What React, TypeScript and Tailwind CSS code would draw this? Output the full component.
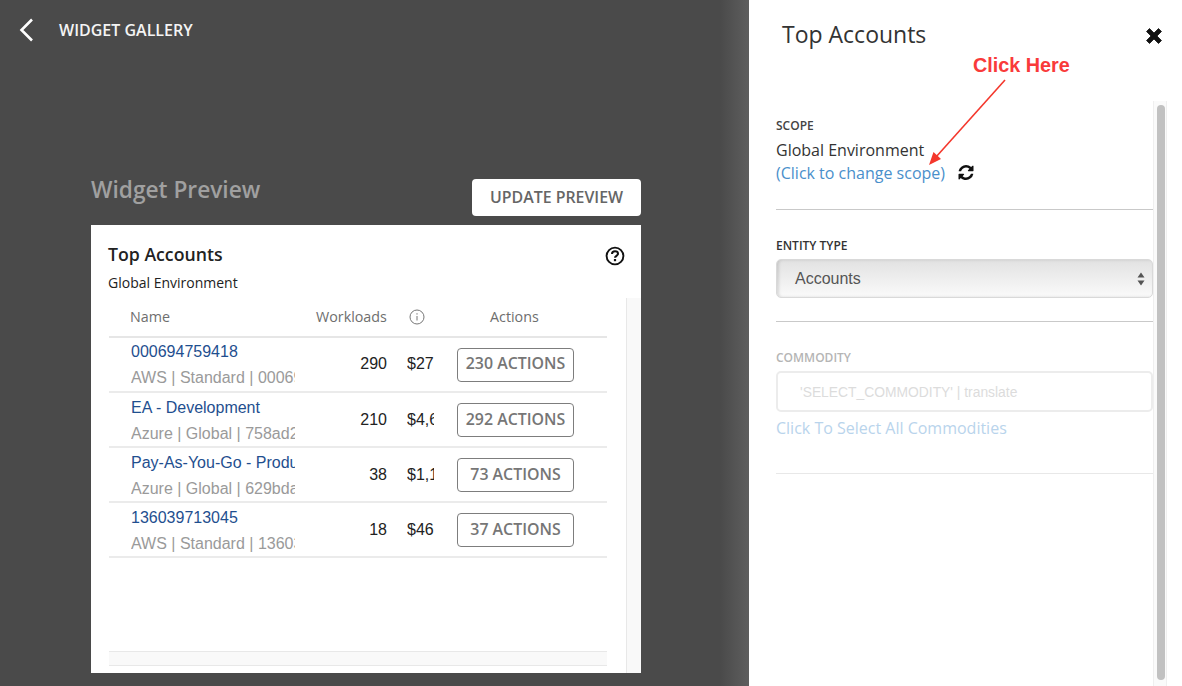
import React from "react";

const open = "font-['Open_Sans',sans-serif]";
const lib = "font-['Liberation_Sans',Arial,sans-serif]";

const rows = [
  { name: "000694759418", sub: "AWS | Standard | 000694759418", w: "290", c: "$27", a: "230 ACTIONS" },
  { name: "EA - Development", sub: "Azure | Global | 758ad253-cbf5", w: "210", c: "$4,6", a: "292 ACTIONS" },
  { name: "Pay-As-You-Go - Production", sub: "Azure | Global | 629bda47-1c", w: "38", c: "$1,1", a: "73 ACTIONS" },
  { name: "136039713045", sub: "AWS | Standard | 136039713045", w: "18", c: "$46", a: "37 ACTIONS" },
];

function Row({ r, first }: { r: (typeof rows)[number]; first: boolean }) {
  return (
    <div className="flex h-[55px] items-stretch border-b-2 border-[#ebebeb]">
      <div className={`ml-[22px] w-[164px] shrink-0 overflow-hidden whitespace-nowrap ${first ? "pt-[3px]" : "pt-[4px]"} ${lib}`}>
        <div className="text-[16px] leading-[22px] text-[#1f4f8f]">{r.name}</div>
        <div className="mt-[4px] text-[16px] leading-[22px] text-[#9a9a9a]">{r.sub}</div>
      </div>
      <div className={`flex w-[92px] shrink-0 items-center justify-end text-[16px] text-[#222] ${first ? "pb-[2px]" : ""} ${lib}`}>{r.w}</div>
      <div className={`ml-[20px] flex w-[27px] shrink-0 items-center overflow-hidden whitespace-nowrap text-[16px] text-[#222] ${first ? "pb-[2px]" : ""} ${lib}`}>{r.c}</div>
      <div className="ml-[23px] flex w-[117px] shrink-0 items-center">
        <div className={`flex h-[34px] w-full items-center justify-center rounded-[4px] border border-[#7d7d7d] text-[15.900px] font-semibold text-[#767676] ${first ? "pb-[1px]" : ""} ${open}`}>{r.a}</div>
      </div>
    </div>
  );
}

export default function App() {
  return (
    <div className={`relative flex h-[686px] w-[1182px] overflow-hidden bg-white ${open}`}>
      {/* left dark area */}
      <div className="flex w-[749px] shrink-0 flex-col bg-[linear-gradient(to_right,#4a4a4a_0,#4a4a4a_720px,#5e5e5e_749px)]">
        <div className="flex h-[60px] items-center pl-[19px]">
          <svg width="15" height="24" viewBox="0 0 15 24" fill="none" stroke="white" strokeWidth="2.6" className="shrink-0">
            <path d="M13 1.500 2.500 12 13 22.500" />
          </svg>
          <span className="ml-[25px] text-[16px] font-semibold text-[#f4f4f4]">WIDGET GALLERY</span>
        </div>
        <div className="ml-[91px] mt-[119px] flex h-[46px] w-[550px] items-start justify-between">
          <span className="mt-[-3px] text-[22.700px] font-semibold leading-[28px] text-[#a0a0a0]">Widget Preview</span>
          <div className="flex h-[37px] w-[169px] items-center justify-center rounded-[4px] bg-white text-[15.900px] font-semibold text-[#666666]">UPDATE PREVIEW</div>
        </div>
        {/* card */}
        <div className="ml-[91px] flex h-[448px] w-[550px] flex-col bg-white">
          <div className="flex h-[73px] shrink-0 justify-between pl-[17px] pr-[16px]">
            <div>
              <div className="mt-[16px] text-[17.700px] font-semibold leading-[26px] text-[#222]">Top Accounts</div>
              <div className="mt-[6px] text-[14px] leading-[20px] text-[#222]">Global Environment</div>
            </div>
            <svg width="20" height="20" viewBox="0 0 20 20" className="mt-[21px]" fill="none">
              <circle cx="10" cy="10" r="8.400" stroke="#111" strokeWidth="1.900" />
              <path d="M7 8c0-1.700 1.300-2.700 3-2.700s3 1 3 2.400c0 2.100-3 2.100-3 4.100" stroke="#111" strokeWidth="2" />
              <rect x="8.900" y="13" width="2.200" height="2.200" fill="#111" />
            </svg>
          </div>
          <div className="flex min-h-0 flex-1">
            <div className="flex w-[535px] shrink-0 flex-col pl-[18px] pr-[19px]">
              <div className="flex h-[40px] shrink-0 items-center border-b-2 border-[#e6e6e6] text-[14.300px] text-[#6e6e6e]">
                <span className="ml-[21px] w-[186px]">Name</span>
                <span className="w-[93px]">Workloads</span>
                <svg width="16" height="16" viewBox="0 0 16 16" fill="none" stroke="#777" strokeWidth="1" className="shrink-0">
                  <circle cx="8" cy="8" r="7" />
                  <path d="M8 7v4.500M8 4.200v1.400" />
                </svg>
                <span className="ml-[65px]">Actions</span>
              </div>
              {rows.map((r, i) => (
                <Row key={r.name} r={r} first={i === 0} />
              ))}
              <div className="mt-[93px] h-[15px] shrink-0 border-y border-[#e8e8e8] bg-[#f9f9f9]" />
            </div>
            <div className="w-[15px] shrink-0 border-l border-[#e8e8e8] bg-[#f9f9f9]" />
          </div>
        </div>
      </div>

      {/* right panel */}
      <div className="relative flex min-w-0 flex-1 flex-col">
        <div className="flex h-[101px] shrink-0 items-start justify-between pl-[33px] pr-[19px]">
          <span className="mt-[17px] text-[23px] leading-[34px] text-[#333]">Top Accounts</span>
          <svg width="18" height="18" viewBox="0 0 18 18" className="mt-[27px]" fill="#111" stroke="#111" strokeWidth="0.8" strokeLinejoin="round">
            <path d="M1.500 4.500 4.500 1.500 9 6l4.500-4.500 3 3L12 9l4.500 4.500-3 3L9 12l-4.500 4.500-3-3L6 9 1.500 4.500Z" />
          </svg>
        </div>
        <div className="flex min-h-0 flex-1">
          <div className="w-[404px] shrink-0 pl-[27px]">
            <div className="h-[109px] border-b border-[#c9c9c9]">
              <div className="pt-[18px] text-[12px] font-semibold leading-[14px] text-[#444]">SCOPE</div>
              <div className="mt-[6px] text-[16px] leading-[23px] text-[#333]">Global Environment</div>
              <div className="flex items-center text-[16px] leading-[23px] text-[#4a8fcb]">
                (Click to change scope)
                <svg width="16" height="15" viewBox="0 0 1536 1536" className="mb-[2px] ml-[13px]" fill="#111">
                  <path d="M1511 928q0 5-1 7-64 268-268 434.500T764 1536q-146 0-282.500-55T238 1324l-129 129q-19 19-45 19t-45-19-19-45V960q0-26 19-45t45-19h448q26 0 45 19t19 45-19 45L420 1142q71 66 161 102t187 36q134 0 250-65t186-179q11-17 53-117 8-23 30-23h192q13 0 22.500 9.500t9.500 22.500zm25-800v448q0 26-19 45t-45 19h-448q-26 0-45-19t-19-45 19-45l138-138Q969 256 768 256q-134 0-250 65T332 500q-11 17-53 117-8 23-30 23H50q-13 0-22.500-9.500T18 608v-7q65-268 270-434.500T768 0q146 0 284 55.500T1297 212l130-129q19-19 45-19t45 19 19 45z" />
                </svg>
              </div>
            </div>
            <div className="h-[112px] border-b border-[#c9c9c9]">
              <div className="pt-[29px] text-[12px] font-semibold leading-[14px] text-[#333]">ENTITY TYPE</div>
              <div className="mt-[6px] flex h-[39px] items-center justify-between rounded-[5px] border border-[#d9d9d9] bg-[linear-gradient(to_bottom,#e2e2e2,#fafafa)] pl-[18px] pr-[7px] shadow-[inset_2px_0_3px_rgba(0,0,0,0.12)]">
                <span className={`text-[16px] text-[#555] ${lib}`}>Accounts</span>
                <svg width="8" height="14" viewBox="0 0 8 14" fill="#555">
                  <path d="M4 0.500 7.500 5.500H0.500ZM4 13.500 0.500 8.500H7.500Z" />
                </svg>
              </div>
            </div>
            <div className="h-[152px] border-b border-[#e8e8e8]">
              <div className="pt-[29px] text-[12px] font-semibold leading-[14px] text-[#b5b5b5]">COMMODITY</div>
              <div className={`mt-[6px] flex h-[41px] items-center rounded-[5px] border-2 border-[#ececec] pl-[22px] pt-[1px] text-[13.850px] text-[#dcdcdc] ${lib}`}>'SELECT_COMMODITY' | translate</div>
              <div className="mt-[5px] text-[16px] leading-[23px] text-[#b9d4ec]">Click To Select All Commodities</div>
            </div>
          </div>
          <div className="w-[14px] shrink-0 border-x border-[#efefef] bg-[#fafafa] pl-[3px] pt-[4px]">
            <div className="h-[575px] w-[8px] rounded-[4px] bg-[#c1c1c1]" />
          </div>
        </div>

        {/* annotation */}
        <span className={`absolute left-[224px] top-[53px] text-[19.800px] font-bold leading-[24px] text-[#f93a3a] ${lib}`}>Click Here</span>
        <svg width="90" height="96" viewBox="0 0 90 96" className="absolute left-[175px] top-[75px]" fill="none">
          <path d="M81 5 12 82" stroke="#f4372c" strokeWidth="1.600" />
          <path d="M5 90 9.500 77 17 84Z" fill="#f4372c" />
        </svg>
      </div>
    </div>
  );
}
